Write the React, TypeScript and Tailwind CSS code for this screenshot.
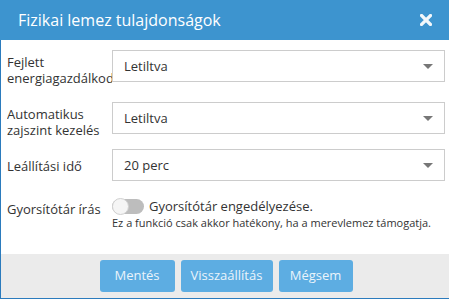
import React from "react";

function Caret() {
  return (
    <svg width="10" height="5" viewBox="0 0 10 5" className="block">
      <polygon points="0,0 10,0 5,5" fill="#777777" />
    </svg>
  );
}

function Select({ value }: { value: string }) {
  return (
    <div className="w-[333px] h-[32px] shrink-0 bg-white border border-[#cccccc] flex items-center justify-between pl-[11px] pr-[11px] text-[13px] text-[#333333]">
      <span>{value}</span>
      <Caret />
    </div>
  );
}

export default function App() {
  return (
    <div className="w-[449px] h-[299px] overflow-hidden flex flex-col bg-white font-['Open_Sans',sans-serif]">
      <div className="h-[40px] shrink-0 bg-[#3d94cf] flex items-center justify-between pl-[18px] pr-[17px]">
        <span className="text-[16px] text-white leading-none">Fizikai lemez tulajdonságok</span>
        <svg width="12" height="12" viewBox="0 0 12 12" className="block">
          <path d="M1.5 1.5 L10.5 10.5 M10.5 1.5 L1.5 10.5" stroke="#f2f7fb" strokeWidth="3.2" strokeLinecap="square" />
        </svg>
      </div>
      <div className="flex-1 flex flex-col border-l border-[#2b7bbd] pl-[6px] pt-[10px] text-[13px] leading-[16px] text-[#333333]">
        <div className="flex">
          <div className="w-[105px] shrink-0 overflow-hidden mt-[4px]">Fejlett energiagazdálkodás</div>
          <Select value="Letiltva" />
        </div>
        <div className="flex mt-[16px]">
          <div className="w-[105px] shrink-0 overflow-hidden mt-[4px]">Automatikus zajszint kezelés</div>
          <Select value="Letiltva" />
        </div>
        <div className="flex mt-[11px]">
          <div className="w-[105px] shrink-0 overflow-hidden mt-[9px]">Leállítási idő</div>
          <Select value="20 perc" />
        </div>
        <div className="flex mt-[17px]">
          <div className="w-[105px] shrink-0 mt-[3px]">Gyorsítótár írás</div>
          <div className="flex flex-col">
            <div className="flex items-center gap-[5px]">
              <div className="relative w-[32px] h-[15px] rounded-full bg-[#bdbdbd]">
                <div className="absolute left-0 top-[-1px] w-[17px] h-[17px] rounded-full bg-[#f5f5f5] border border-[#d0d0d0]" />
              </div>
              <span>Gyorsítótár engedélyezése.</span>
            </div>
            <div className="text-[11px] leading-[14px] mt-[2px]">Ez a funkció csak akkor hatékony, ha a merevlemez támogatja.</div>
          </div>
        </div>
      </div>
      <div className="h-[45px] shrink-0 bg-[#ebebeb] border-l border-b border-[#2b7bbd] flex justify-center items-start pt-[6px] gap-[6px] pl-[2px]">
        <button className="h-[32px] w-[75px] rounded-[3px] bg-[#5dade2] text-[13px] text-[#eaf4fb]">Mentés</button>
        <button className="h-[32px] w-[92px] rounded-[3px] bg-[#5dade2] text-[13px] text-[#eaf4fb]">Visszaállítás</button>
        <button className="h-[32px] w-[74px] rounded-[3px] bg-[#5dade2] text-[13px] text-[#eaf4fb]">Mégsem</button>
      </div>
    </div>
  );
}
